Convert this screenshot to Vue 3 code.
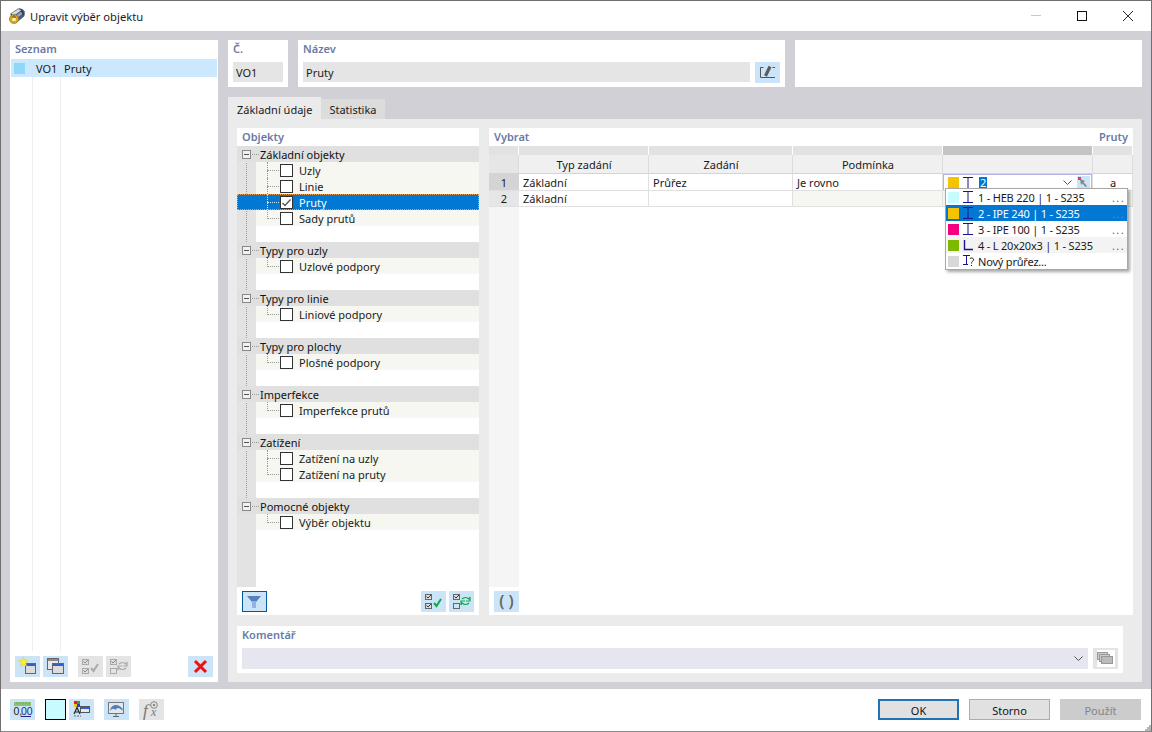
<template>
  <div class="window">
    <!-- titulek okna -->
    <header class="titlebar">
      <svg class="app-icon" width="16" height="16" viewBox="0 0 16 16">
        <path d="M1 6 L9 .5 Q13 -.5 15.5 3 Q16.5 7 14.5 9 L7 15 Z" fill="#4e5c72" />
        <path d="M2.5 5.5 L9.5 1 L12 2.5 L4.5 8 Z" fill="#d0dae6" />
        <path d="M5.5 8.5 L13 3.2 L14.6 5.2 L7 10.5 Z" fill="#93a6bd" />
        <path d="M12.5 2 Q15 3.5 15 6.5 L13.5 7.5 Q13.5 4.5 11.5 3 Z" fill="#2f3a4c" />
        <circle cx="5" cy="11" r="4.6" fill="#d9a520" stroke="#8a6d20" stroke-width="0.6" />
        <rect x="3.3" y="10" width="3.4" height="3" fill="#fff2b0" />
        <path d="M3.9 10 V8.8 a1.1 1.1 0 0 1 2.2 0 V10" fill="none" stroke="#5a4a20" stroke-width="0.8" />
      </svg>
      <span class="title">Upravit výběr objektu</span>
      <div class="win-controls">
        <svg width="12" height="12" viewBox="0 0 12 12"><path d="M1 5.5 H11" stroke="#c8c8c8" /></svg>
        <svg width="12" height="12" viewBox="0 0 12 12"><rect x="1.5" y="1.5" width="9" height="9" fill="none" stroke="#111" /></svg>
        <svg width="12" height="12" viewBox="0 0 12 12"><path d="M1 1 L11 11 M11 1 L1 11" stroke="#111" stroke-width="0.9" /></svg>
      </div>
    </header>

    <main class="main">
      <!-- seznam vlevo -->
      <aside class="panel list-panel">
        <div class="caption">Seznam</div>
        <div class="list">
          <div class="list-row">
            <span class="list-swatch"></span>
            <span class="list-no">VO1</span>
            <span>Pruty</span>
          </div>
        </div>
        <div class="list-tools">
          <button class="tool">
            <svg width="25" height="21" viewBox="0 0 25 21">
              <rect x="10.5" y="7.5" width="10" height="10" fill="#dcdcdc" stroke="#666" />
              <rect x="11" y="8" width="9" height="2" fill="#2f5fd0" />
              <path d="M8.5 1 L9.9 4.2 L13.5 4.6 L10.8 6.8 L11.5 10.2 L8.5 8.4 L5.5 10.2 L6.2 6.8 L3.5 4.6 L7.1 4.2 Z" fill="#f7f03a" stroke="#d8c830" stroke-width="0.5" />
            </svg>
          </button>
          <button class="tool">
            <svg width="25" height="21" viewBox="0 0 25 21">
              <rect x="4.5" y="2.5" width="11" height="11" fill="#e8e8e8" stroke="#666" />
              <rect x="5" y="3" width="10" height="2" fill="#8a8a8a" />
              <rect x="9.5" y="7.5" width="11" height="10" fill="#dcdcdc" stroke="#666" />
              <rect x="10" y="8" width="10" height="2" fill="#2f5fd0" />
            </svg>
          </button>
          <button class="tool off first-off">
            <svg width="25" height="21" viewBox="0 0 25 21">
              <rect x="4.5" y="3.5" width="6" height="5" fill="#ddd" stroke="#aaa" />
              <rect x="4.5" y="12.5" width="6" height="5" fill="#ddd" stroke="#aaa" />
              <path d="M5.5 5.5 L7 7 L10 4 M5.5 14.5 L7 16 L10 13" fill="none" stroke="#888" />
              <path d="M13 12 L15.5 15 L20 8" fill="none" stroke="#aaa" stroke-width="2" />
            </svg>
          </button>
          <button class="tool off">
            <svg width="25" height="21" viewBox="0 0 25 21">
              <rect x="4.5" y="3.5" width="6" height="5" fill="#ddd" stroke="#aaa" />
              <rect x="4.5" y="12.5" width="6" height="5" fill="none" stroke="#aaa" />
              <path d="M5.5 5.5 L7 7 L10 4" fill="none" stroke="#888" />
              <path d="M13 8 C15 6 18 6 20 8 L21 6 V10 H17 M20 12 C18 14 15 14 13 12 L12 14 V10 H16" fill="none" stroke="#aaa" stroke-width="1.2" />
            </svg>
          </button>
          <button class="tool delete">
            <svg width="25" height="21" viewBox="0 0 25 21">
              <path d="M7 5 L18 16 M18 5 L7 16" stroke="#f01010" stroke-width="3" />
            </svg>
          </button>
        </div>
      </aside>

      <section class="content">
        <div class="top-row">
          <div class="panel no-panel">
            <div class="caption">Č.</div>
            <div class="field">VO1</div>
          </div>
          <div class="panel name-panel">
            <div class="caption">Název</div>
            <div class="name-line">
              <div class="field grow">Pruty</div>
              <button class="tool">
                <svg width="25" height="21" viewBox="0 0 25 21">
                  <path d="M8.5 5.5 H5.5 V15.5 H20 M17.5 5.5 H20" fill="none" stroke="#555" />
                  <path d="M10.5 14 L15 4.5" fill="none" stroke="#5c5c5c" stroke-width="3.2" />
                </svg>
              </button>
            </div>
          </div>
          <div class="panel blank-panel"></div>
        </div>

        <div class="tabs">
          <div class="tab active">Základní údaje</div>
          <div class="tab">Statistika</div>
        </div>

        <div class="tab-body">
          <div class="work">
            <!-- strom objektů -->
            <div class="panel objects">
              <div class="caption">Objekty</div>
              <div class="tree">
                <span class="tree-spine"></span>
                <template v-for="group in groups" :key="group.name">
                  <div class="group-row">
                    <span class="expander"></span>
                    <span class="group-name">{{ group.name }}</span>
                  </div>
                  <div
                    v-for="(item, i) in group.items"
                    :key="item"
                    class="item-row"
                    :class="{ selected: item === 'Pruty', last: i === group.items.length - 1 }"
                  >
                    <span class="checkbox">
                      <svg v-if="item === 'Pruty'" width="13" height="13" viewBox="0 0 13 13">
                        <path d="M2.5 7 L5 9.5 L10.5 3.5" fill="none" stroke="#555" stroke-width="1.3" />
                      </svg>
                    </span>
                    <span>{{ item }}</span>
                  </div>
                  <div class="spacer-row"></div>
                </template>
              </div>
              <div class="objects-tools">
                <button class="tool pressed">
                  <svg width="23" height="19" viewBox="0 0 23 19">
                    <path d="M4 4 H18 L13 10 V16 H9 V10 Z" fill="#5480bd" />
                    <path d="M8 9 H14 L13 10 V16 H9 V10 Z" fill="#8fb3e6" />
                  </svg>
                </button>
                <span class="push"></span>
                <button class="tool">
                  <svg width="25" height="21" viewBox="0 0 25 21">
                    <rect x="4.5" y="3.5" width="6" height="5" fill="#ddd" stroke="#666" />
                    <rect x="4.5" y="12.5" width="6" height="5" fill="#ddd" stroke="#666" />
                    <path d="M5.5 5.5 L7 7 L10 4 M5.5 14.5 L7 16 L10 13" fill="none" stroke="#333" />
                    <path d="M13 12 L15.5 15 L20 8" fill="none" stroke="#12a84a" stroke-width="2" />
                  </svg>
                </button>
                <button class="tool">
                  <svg width="25" height="21" viewBox="0 0 25 21">
                    <rect x="4.5" y="3.5" width="6" height="5" fill="#ddd" stroke="#666" />
                    <rect x="4.5" y="12.5" width="6" height="5" fill="none" stroke="#666" />
                    <path d="M5.5 5.5 L7 7 L10 4" fill="none" stroke="#333" />
                    <path d="M13 8 C15 6 18 6 20 8 L21 6 V10 H17 M20 12 C18 14 15 14 13 12 L12 14 V10 H16" fill="none" stroke="#12a84a" stroke-width="1.2" />
                  </svg>
                </button>
              </div>
            </div>

            <!-- tabulka výběru -->
            <div class="panel select-panel">
              <div class="caption caption-split">
                <span>Vybrat</span>
                <span>Pruty</span>
              </div>
              <div class="sheet">
                <table class="grid">
                  <colgroup>
                    <col style="width: 30px" />
                    <col style="width: 130px" />
                    <col style="width: 144px" />
                    <col style="width: 150px" />
                    <col style="width: 150px" />
                    <col style="width: 40px" />
                  </colgroup>
                  <thead>
                    <tr class="band">
                      <th></th><th></th><th></th><th></th><th class="dark"></th><th></th>
                    </tr>
                    <tr class="heads">
                      <th class="corner"></th>
                      <th>Typ zadání</th>
                      <th>Zadání</th>
                      <th>Podmínka</th>
                      <th></th>
                      <th></th>
                    </tr>
                  </thead>
                  <tbody>
                    <tr>
                      <td class="num current">1</td>
                      <td>Základní</td>
                      <td>Průřez</td>
                      <td>Je rovno</td>
                      <td class="editor-cell">
                        <div class="editor">
                          <span class="swatch" style="background: #f5c400"></span>
                          <svg class="sec" width="10" height="12" viewBox="0 0 10 12"><path d="M0 .5 H10 M5 .5 V11.5 M0 11.5 H10" stroke="#14148c" /></svg>
                          <span class="sel-text">2</span>
                          <span class="push"></span>
                          <svg width="9" height="6" viewBox="0 0 9 6"><path d="M.5 .5 L4.5 4.5 L8.5 .5" fill="none" stroke="#555" /></svg>
                          <span class="pick">
                            <svg width="13" height="13" viewBox="0 0 13 13">
                              <path d="M3 3 L8 5 L6.5 6.3 L10 10 L8.7 11 L5.3 7.5 L4 9 Z" fill="#888" />
                              <rect x="1" y="1" width="3" height="3" fill="#d04060" />
                            </svg>
                          </span>
                        </div>
                        <div class="dropdown">
                          <div
                            v-for="opt in options"
                            :key="opt.label"
                            class="opt"
                            :class="{ hot: opt.hot, shaded: opt.shaded }"
                          >
                            <span class="swatch" :style="{ background: opt.color }"></span>
                            <svg v-if="opt.kind === 'i'" class="sec" width="10" height="12" viewBox="0 0 10 12"><path d="M0 .5 H10 M5 .5 V11.5 M0 11.5 H10" stroke="#14148c" /></svg>
                            <svg v-else-if="opt.kind === 'l'" class="sec" width="10" height="12" viewBox="0 0 10 12"><path d="M1.5 1 V10.5 H10" fill="none" stroke="#14148c" stroke-width="1.4" /></svg>
                            <svg v-else class="sec" width="12" height="12" viewBox="0 0 12 12"><path d="M0 .5 H7 M3.5 .5 V9 M0 9.5 H5" stroke="#14148c" /><path d="M7 4 C7 2.5 11 2.5 10.5 5 C10 6.5 8.5 6.5 8.5 8.5 M8.5 10 V11" fill="none" stroke="#222" /></svg>
                            <span class="opt-label">{{ opt.label }}</span>
                            <span v-if="opt.more" class="more">...</span>
                          </div>
                        </div>
                      </td>
                      <td class="center">a</td>
                    </tr>
                    <tr>
                      <td class="num">2</td>
                      <td>Základní</td>
                      <td></td>
                      <td class="tinted"></td>
                      <td class="tinted"></td>
                      <td class="tinted"></td>
                    </tr>
                  </tbody>
                </table>
                <div class="sheet-rest"><span class="rest-gutter"></span></div>
              </div>
              <div class="select-tools">
                <button class="tool brackets">( )</button>
              </div>
            </div>
          </div>

          <div class="panel comment">
            <div class="caption">Komentář</div>
            <div class="comment-line">
              <div class="comment-box">
                <svg width="9" height="6" viewBox="0 0 9 6"><path d="M.5 .5 L4.5 4.5 L8.5 .5" fill="none" stroke="#555" /></svg>
              </div>
              <button class="tool off">
                <svg width="25" height="21" viewBox="0 0 25 21">
                  <rect x="4" y="2" width="18" height="17" fill="#fff" />
                  <rect x="4.5" y="4.5" width="10" height="7" fill="#ccc" stroke="#999" />
                  <rect x="6.5" y="6.5" width="10" height="7" fill="#ccc" stroke="#999" />
                  <rect x="8.5" y="8.5" width="11" height="7" fill="#bbb" stroke="#999" />
                </svg>
              </button>
            </div>
          </div>
        </div>
      </section>
    </main>

    <footer class="footer">
      <button class="tool">
        <svg width="25" height="21" viewBox="0 0 25 21">
          <rect x="4" y="3" width="17" height="4" fill="#8fc070" />
          <path d="M7 3 V5 M10 3 V5 M13 3 V5 M16 3 V5 M19 3 V5" stroke="#6a9a50" stroke-width="0.6" />
          <text x="3.5" y="16" font-size="10.5" font-family="Liberation Sans, sans-serif" fill="#222">0,</text>
          <text x="11" y="16" font-size="10.5" font-family="Liberation Sans, sans-serif" fill="#1a2a8c">00</text>
          <path d="M11 17.5 H21" stroke="#1a2a8c" />
        </svg>
      </button>
      <span class="color-box"></span>
      <button class="tool tight">
        <svg width="25" height="21" viewBox="0 0 25 21">
          <rect x="5" y="2" width="3" height="3" fill="#e02020" />
          <rect x="8" y="2" width="3" height="3" fill="#30a030" />
          <rect x="5" y="5" width="3" height="3" fill="#f0c020" />
          <rect x="8" y="5" width="3" height="3" fill="#2040d0" />
          <path d="M5 15 L8 8.5 L11 15 M6 13 H10" fill="none" stroke="#222" stroke-width="1.2" />
          <rect x="11.5" y="7.5" width="9" height="6" fill="#e8e8e8" stroke="#555" />
          <rect x="12" y="8" width="8" height="2" fill="#2f5fd0" />
          <path d="M5 17 H12" stroke="#666" stroke-dasharray="2 1" />
        </svg>
      </button>
      <button class="tool gap">
        <svg width="25" height="21" viewBox="0 0 25 21">
          <rect x="4.5" y="3.5" width="15" height="11" fill="#e4e8ec" stroke="#777" />
          <path d="M6 12 C7 5 14 4 18.5 9.5 L18.5 12 C15 8 13 8.5 11.5 11 C10 9 8 9.5 6 12 Z" fill="#4f7fb5" />
          <path d="M12 14.5 V17 M9 17.5 H15" stroke="#666" />
        </svg>
      </button>
      <button class="tool off gap">
        <svg width="25" height="21" viewBox="0 0 25 21">
          <text x="4" y="17" font-size="17" font-style="italic" font-family="Liberation Serif, serif" fill="#777">f</text>
          <text x="12" y="17" font-size="12" font-style="italic" font-family="Liberation Serif, serif" fill="#777">x</text>
          <circle cx="15" cy="6" r="3.3" fill="none" stroke="#888" />
          <circle cx="15" cy="6" r="1.2" fill="#888" />
        </svg>
      </button>
      <span class="push"></span>
      <button class="btn default">OK</button>
      <button class="btn">Storno</button>
      <button class="btn disabled">Použít</button>
      <svg class="grip" width="6" height="6" viewBox="0 0 6 6">
        <path d="M4 0 h2 v2 h-2z M2 2 h2 v2 h-2z M4 2 h2 v2 h-2z M0 4 h2 v2 h-2z M2 4 h2 v2 h-2z M4 4 h2 v2 h-2z" fill="#b5b5b5" />
      </svg>
    </footer>
  </div>
</template>

<script setup>
// skupiny ve stromu objektů
const groups = [
  { name: 'Základní objekty', items: ['Uzly', 'Linie', 'Pruty', 'Sady prutů'] },
  { name: 'Typy pro uzly', items: ['Uzlové podpory'] },
  { name: 'Typy pro linie', items: ['Liniové podpory'] },
  { name: 'Typy pro plochy', items: ['Plošné podpory'] },
  { name: 'Imperfekce', items: ['Imperfekce prutů'] },
  { name: 'Zatížení', items: ['Zatížení na uzly', 'Zatížení na pruty'] },
  { name: 'Pomocné objekty', items: ['Výběr objektu'] }
]

// nabídka průřezů
const options = [
  { label: '1 - HEB 220 | 1 - S235', color: '#c8fbff', kind: 'i', more: true },
  { label: '2 - IPE 240 | 1 - S235', color: '#f5c400', kind: 'i', more: true, hot: true },
  { label: '3 - IPE 100 | 1 - S235', color: '#f5007f', kind: 'i', more: true },
  { label: '4 - L 20x20x3 | 1 - S235', color: '#7fb800', kind: 'l', more: true, shaded: true },
  { label: 'Nový průřez...', color: '#d8d8d8', kind: 'new' }
]
</script>

<style>
html,
body {
  margin: 0;
  background: #fff;
}
</style>

<style scoped>
.window {
  width: 1152px;
  height: 732px;
  box-sizing: border-box;
  display: flex;
  flex-direction: column;
  border: 1px solid #6f6f6f;
  border-bottom-color: #8a8a8a;
  background: #fff;
  font-family: "Noto Sans", sans-serif;
  font-size: 11px;
  color: #1a1a1a;
  overflow: hidden;
}

button {
  font-family: inherit;
  padding: 0;
  border: none;
  cursor: default;
}

.titlebar {
  height: 30px;
  flex: none;
  display: flex;
  align-items: center;
  padding-left: 8px;
}

.app-icon {
  margin-right: 5px;
}

.title {
  font-size: 11.2px;
}

.win-controls {
  margin-left: auto;
  display: flex;
  gap: 34px;
  padding-right: 17px;
}

.main {
  height: 658px;
  flex: none;
  box-sizing: border-box;
  background: #d1d0d6;
  padding: 9px 9px 7px 9px;
  display: flex;
  gap: 10px;
}

.panel {
  background: #fff;
  box-sizing: border-box;
}

.caption {
  height: 18px;
  line-height: 18px;
  padding-left: 5px;
  color: #6a7aa6;
  font-weight: 600;
}

.caption-split {
  display: flex;
  justify-content: space-between;
  padding-right: 5px;
}

.tool {
  width: 25px;
  height: 21px;
  flex: none;
  display: block;
  background: #cce4f7;
}

.tool svg {
  display: block;
}

.tool.off {
  background: #e4e4e4;
}

.push {
  flex: 1;
}

/* seznam */
.list-panel {
  width: 208px;
  flex: none;
  display: flex;
  flex-direction: column;
}

.list {
  flex: 1;
  margin: 1px 1px 5px;
  background:
    linear-gradient(#eee, #eee) 21px 0 / 1px 100% no-repeat,
    linear-gradient(#eee, #eee) 49px 0 / 1px 100% no-repeat;
}

.list-row {
  height: 18px;
  box-sizing: border-box;
  padding-top: 1px;
  background: #cce8ff;
  display: flex;
  align-items: center;
}

.list-swatch {
  width: 11px;
  height: 11px;
  margin: -1px 11px 0 3px;
  background: #8fd8f8;
}

.list-no {
  width: 28px;
}

.list-tools {
  display: flex;
  gap: 3px;
  padding: 0 5px 5px;
}

.first-off {
  margin-left: 7px;
}

.delete {
  margin-left: auto;
}

/* horní řada */
.content {
  flex: 1;
  min-width: 0;
  display: flex;
  flex-direction: column;
}

.top-row {
  display: flex;
  gap: 10px;
  height: 47px;
  flex: none;
}

.no-panel {
  width: 60px;
}

.name-panel {
  width: 487px;
}

.blank-panel {
  flex: 1;
}

.no-panel,
.name-panel {
  padding: 0 5px;
}

.no-panel .caption,
.name-panel .caption {
  padding-left: 0;
  margin-bottom: 4px;
}

.field {
  height: 20px;
  line-height: 22px;
  padding-left: 3px;
  background: #e5e5e5;
}

.name-line {
  display: flex;
  gap: 5px;
}

.grow {
  flex: 1;
}

/* záložky */
.tabs {
  display: flex;
  align-items: flex-end;
  height: 22px;
  flex: none;
  margin-top: 10px;
}

.tab {
  height: 20px;
  line-height: 22px;
  padding: 0 9px 0 7px;
  background: #dcdcdc;
}

.tab.active {
  height: 22px;
  line-height: 26px;
  padding: 0 9px;
  background: #ebebeb;
}

.tab.active + .tab {
  padding-left: 8px;
  padding-right: 8px;
}

.tab-body {
  flex: 1;
  min-height: 0;
  background: #ebebeb;
  padding: 9px;
  display: flex;
  flex-direction: column;
  gap: 11px;
}

.work {
  flex: 1;
  min-height: 0;
  display: flex;
  gap: 10px;
}

/* strom */
.objects {
  width: 242px;
  flex: none;
  display: flex;
  flex-direction: column;
}

.tree {
  position: relative;
  flex: 1;
  min-height: 0;
  background: linear-gradient(to right, #e3e3e3 19px, #fff 19px);
}

.tree-spine {
  position: absolute;
  left: 9px;
  top: 8px;
  height: 352px;
  border-left: 1px dotted #9a9a9a;
}

.group-row {
  position: relative;
  height: 16px;
  line-height: 18px;
  background: #e0e0e0;
  padding-left: 23px;
  color: #111;
}

.expander {
  position: absolute;
  left: 5px;
  top: 4px;
  width: 9px;
  height: 9px;
  border: 1px solid #8a8a8a;
  background: linear-gradient(#555, #555) center / 5px 1px no-repeat #f0f0f0;
  box-sizing: border-box;
  z-index: 1;
}

.expander::after {
  content: "";
  position: absolute;
  left: 9px;
  top: 3px;
  width: 7px;
  border-top: 1px dotted #9a9a9a;
}

.item-row {
  position: relative;
  height: 16px;
  box-sizing: border-box;
  padding-top: 1px;
  margin-left: 19px;
  background: #f6f7f0;
  display: flex;
  align-items: center;
  padding-left: 24px;
}

.item-row::before {
  content: "";
  position: absolute;
  left: 11px;
  top: 8px;
  width: 12px;
  border-top: 1px dotted #9a9a9a;
}

.item-row::after {
  content: "";
  position: absolute;
  left: 11px;
  top: 0;
  height: 100%;
  border-left: 1px dotted #9a9a9a;
}

.item-row.last::after {
  height: 9px;
}

.item-row.selected {
  margin-left: 0;
  padding-left: 43px;
  background: #0078d4;
  color: #fff;
  outline: 1px dotted #e8a050;
  outline-offset: -1px;
}

.item-row.selected::before,
.item-row.selected::after {
  left: 30px;
  border-color: #cfe4f5;
}

.checkbox {
  width: 13px;
  height: 13px;
  box-sizing: border-box;
  border: 1px solid #333;
  background: #fff;
  margin-right: 6px;
  flex: none;
  position: relative;
}

.checkbox svg {
  display: block;
  margin: -1px;
}

.spacer-row {
  height: 16px;
}

.objects-tools {
  height: 28px;
  flex: none;
  display: flex;
  gap: 3px;
  padding: 4px 5px 0;
  box-sizing: border-box;
}

.pressed {
  box-sizing: border-box;
  border: 1px solid #005a9e;
}

/* tabulka */
.select-panel {
  flex: 1;
  min-width: 0;
  display: flex;
  flex-direction: column;
}

.sheet {
  flex: 1;
  min-height: 0;
  display: flex;
  flex-direction: column;
}

.grid {
  width: 644px;
  table-layout: fixed;
  border-collapse: separate;
  border-spacing: 0;
}

.band th {
  height: 9px;
  padding: 0;
  background: #e2e2e2;
  border-right: 1px solid #fff;
}

.band th.dark {
  background: #c4c4c4;
}

.heads th {
  height: 19px;
  padding: 1px 0 0 1px;
  font-weight: 400;
  background: #f0f0f0;
  border-right: 1px solid #dcdcdc;
  border-bottom: 1px solid #d4d4d4;
  box-sizing: border-box;
}

.heads th.corner {
  background: #e6e6e6;
}

.grid td {
  height: 16px;
  padding: 0 0 0 4px;
  box-sizing: border-box;
  border-right: 1px solid #e0e0e0;
  border-bottom: 1px solid #e0e0e0;
  white-space: nowrap;
  line-height: 15px;
}

.grid td.num {
  padding: 0;
  text-align: center;
  background: #e6e6e6;
  border-right: none;
}

.grid td.num.current {
  background: #d4d4d4;
}

.grid td.tinted {
  background: #f6f7f0;
}

.grid td.center {
  padding: 0 0 0 1px;
  text-align: center;
}

.grid td.editor-cell {
  position: relative;
  padding: 0;
}

.editor {
  height: 16px;
  box-sizing: border-box;
  border: 1px solid #b4b4e6;
  border-bottom: none;
  display: flex;
  align-items: center;
  padding-left: 4px;
}

.swatch {
  width: 11px;
  height: 11px;
  flex: none;
}

.sec {
  flex: none;
  margin-left: 4px;
}

.sel-text {
  margin-left: 6px;
  padding: 0 1px;
  background: #0078d4;
  color: #fff;
  line-height: 12px;
}

.pick {
  width: 13px;
  height: 13px;
  margin: 0 1px 0 5px;
  background: #cce4f7;
  display: block;
}

.pick svg {
  display: block;
}

.dropdown {
  position: absolute;
  left: 2px;
  top: 14px;
  width: 183px;
  box-sizing: border-box;
  background: #fff;
  border: 1px solid #a8a8a8;
  box-shadow: 2px 2px 3px rgba(0, 0, 0, 0.35);
  z-index: 5;
}

.opt {
  height: 16px;
  display: flex;
  align-items: center;
  padding-left: 2px;
}

.opt.hot {
  background: #0078d4;
  color: #fff;
}

.opt.shaded {
  background: #f3f3f3;
}

.opt-label {
  position: absolute;
  left: 32px;
  letter-spacing: -0.2px;
}

.more {
  margin-left: auto;
  padding-right: 2px;
  color: #666;
  letter-spacing: 1.4px;
}

.opt.hot .more {
  color: #4d96d8;
}

.sheet-rest {
  flex: 1;
  min-height: 0;
  display: flex;
}

.rest-gutter {
  width: 30px;
  background: #f5f5f5;
}

.select-tools {
  height: 28px;
  flex: none;
  padding: 4px 5px 0;
  box-sizing: border-box;
}

.brackets {
  font-size: 16px;
  line-height: 19px;
  font-weight: 600;
  color: #666;
}

/* komentář */
.comment {
  height: 47px;
  flex: none;
  margin-right: 10px;
  padding: 0 5px;
}

.comment .caption {
  padding-left: 0;
  height: 22px;
}

.comment-line {
  display: flex;
  gap: 5px;
}

.comment-box {
  flex: 1;
  height: 21px;
  background: #e6e6f0;
  display: flex;
  align-items: center;
  justify-content: flex-end;
  padding-right: 5px;
}

/* patička */
.footer {
  position: relative;
  flex: 1;
  display: flex;
  align-items: flex-start;
  padding: 10px 10px 0 9px;
}

.color-box {
  width: 21px;
  height: 21px;
  box-sizing: border-box;
  border: 1px solid #000;
  background: #c8fbff;
  margin-left: 10px;
  flex: none;
}

.tool.tight {
  margin-left: 3px;
}

.tool.gap {
  margin-left: 10px;
}

.btn {
  width: 81px;
  height: 21px;
  margin: 0 0 0 10px;
  padding-top: 1px;
  font-size: 11px;
  background: #e1e1e1;
  border: 1px solid #adadad;
  color: #111;
  box-sizing: border-box;
}

.btn.default {
  border: 2px solid #1f74b8;
}

.btn.disabled {
  background: #ccc;
  border-color: #ccc;
  color: #858585;
}

.grip {
  position: absolute;
  right: 0;
  bottom: 0;
}
</style>
